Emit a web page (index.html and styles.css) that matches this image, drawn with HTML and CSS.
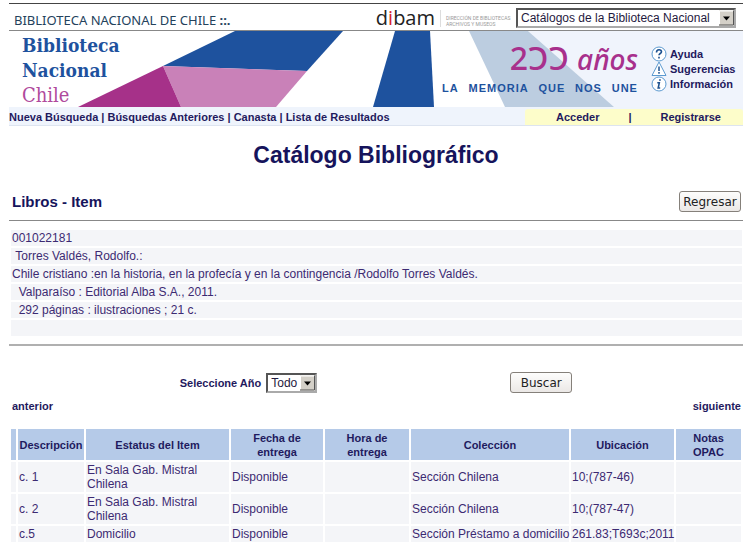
FILE: index.html
```
<!DOCTYPE html>
<html lang="es">
<head>
<meta charset="utf-8">
<meta name="viewport" content="width=device-width, initial-scale=1.0">
<title>Catálogo Bibliográfico</title>
<link rel="stylesheet" href="styles.css">
</head>

<body>

<!-- Cabecera -->
<div class="topbar">
	<div class="inst">BIBLIOTECA NACIONAL DE CHILE <b>::.</b></div>
	<div class="dibam">d<span>i</span>bam</div>
	<div class="dir">DIRECCIÓN DE BIBLIOTECAS<br>ARCHIVOS Y MUSEOS</div>
	<div class="select">
		<select class="catalogs" aria-label="Catálogo">
			<option>Catálogos de la Biblioteca Nacional</option>
		</select>
		<svg class="arrow" viewBox="0 0 15 15"><path fill="#d4d0c8" d="M0 0h15v15H0z"/><path fill="none" stroke="#fff" d="M.5 14V.5H14"/><path fill="none" stroke="#555" d="M14.5 0v14.5H0"/><path d="M4 6h7L7.500 10z"/></svg>
	</div>
</div>

<div class="banner">
	<svg class="art" viewBox="0 0 734 76" preserveAspectRatio="none">
		<path fill="#f0f4fc" d="M519 0h215v76H605z"/>
		<path fill="#bccde0" d="M460 0h59l86 76H496z"/>
		<path fill="#1e529e" d="M154 35L226 0h108l-36 40z"/>
		<path fill="#c981b8" d="M154 35l144 5-31 36h-95z"/>
		<path fill="#a63189" d="M154 35l18 41H69z"/>
		<path fill="#1e529e" d="M386 0h35l4 76h-61z"/>
	</svg>
	<div class="logo">Biblioteca<br>Nacional<br><span>Chile</span></div>
	<div class="slogan">
		<div class="years">2ƆƆ <i>años</i></div>
		<div class="motto"><span>LA</span> <span>MEMORIA</span> <span>QUE</span> <span>NOS</span> <span>UNE</span></div>
	</div>
	<div class="help">
		<a href="#"><svg viewBox="0 0 16 16"><circle cx="8" cy="8" r="7" fill="#fff" stroke="#5c9ad0"/><path fill="none" stroke="#1e5290" stroke-width="1.600" d="M5.500 6.500c0-3.500 5-3.500 5-.700 0 1.700-2.500 1.700-2.500 3.500M8 10.800v1.700"/></svg>Ayuda</a>
		<a href="#"><svg viewBox="0 0 16 16"><path fill="#fff" stroke="#5c9ad0" stroke-linejoin="round" d="M8 1l7 13.500H1z"/><path stroke="#1e5290" stroke-width="1.500" d="M8 5.500v4.500M8 11v1.700"/></svg>Sugerencias</a>
		<a href="#"><svg viewBox="0 0 16 16"><circle cx="8" cy="8" r="7" fill="#fff" stroke="#5c9ad0"/><path fill="none" stroke="#1e5290" stroke-width="1.600" d="M9.200 3.200l-.5 1.600M6.300 6.800h2L7.200 12h2"/></svg>Información</a>
	</div>
</div>

<!-- Menu -->
<div class="menu">
	<div class="links"><a href="#">Nueva Búsqueda</a> | <a href="#">Búsquedas Anteriores</a> | <a href="#">Canasta</a> | <a href="#">Lista de Resultados</a></div>
	<div class="session"><a href="#">Acceder</a> <span>|</span> <a href="#">Registrarse</a></div>
</div>

<h1>Catálogo Bibliográfico</h1>

<div class="title">
	<h2>Libros - Item</h2>
	<button type="button">Regresar</button>
</div>
<hr>

<div class="record">
	<div>001022181</div>
	<div>&nbsp;Torres Valdés, Rodolfo.:</div>
	<div>Chile cristiano :en la historia, en la profecía y en la contingencia /Rodolfo Torres Valdés.</div>
	<div>&nbsp; Valparaíso : Editorial Alba S.A., 2011.</div>
	<div>&nbsp; 292 páginas : ilustraciones ; 21 c.</div>
	<div></div>
</div>
<hr class="light">

<form class="filter">
	<label for="year">Seleccione Año</label>
	<div class="select">
		<select id="year">
			<option>Todo</option>
		</select>
		<svg class="arrow" viewBox="0 0 15 15"><path fill="#d4d0c8" d="M0 0h15v15H0z"/><path fill="none" stroke="#fff" d="M.5 14V.5H14"/><path fill="none" stroke="#555" d="M14.5 0v14.5H0"/><path d="M4 6h7L7.500 10z"/></svg>
	</div>
	<button type="button">Buscar</button>
</form>

<div class="pager">
	<a href="#">anterior</a>
	<a href="#">siguiente</a>
</div>

<table>
	<colgroup>
		<col class="c-mark"><col class="c-desc"><col class="c-status"><col class="c-date"><col class="c-hour"><col class="c-coll"><col class="c-loc"><col class="c-notes">
	</colgroup>
	<tr>
		<th></th>
		<th>Descripción</th>
		<th>Estatus del Item</th>
		<th>Fecha de<br>entrega</th>
		<th>Hora de<br>entrega</th>
		<th>Colección</th>
		<th>Ubicación</th>
		<th>Notas<br>OPAC</th>
	</tr>
	<tr>
		<td></td>
		<td>c. 1</td>
		<td>En Sala Gab. Mistral<br>Chilena</td>
		<td>Disponible</td>
		<td></td>
		<td>Sección Chilena</td>
		<td>10;(787-46)</td>
		<td></td>
	</tr>
	<tr>
		<td></td>
		<td>c. 2</td>
		<td>En Sala Gab. Mistral<br>Chilena</td>
		<td>Disponible</td>
		<td></td>
		<td>Sección Chilena</td>
		<td>10;(787-47)</td>
		<td></td>
	</tr>
	<tr>
		<td></td>
		<td>c.5</td>
		<td>Domicilio</td>
		<td>Disponible</td>
		<td></td>
		<td>Sección Préstamo a domicilio</td>
		<td>261.83;T693c;2011</td>
		<td></td>
	</tr>
</table>

</body>
</html>
```
FILE: styles.css
```
* {
  box-sizing: border-box;
}
body {
  margin: 3px 9px 8px;
  background: #fff;
  color: #1f1a5e;
  font-family: "Liberation Sans", Arial, sans-serif;
  font-size: 12px;
  line-height: 14px;
}
a {
  color: inherit;
  text-decoration: none;
}


/* cabecera */
.topbar {
  display: flex;
  align-items: center;
  height: 28px;
  padding: 2px 7px 0 5px;
  border-top: 1px solid #444;
  border-bottom: 1px solid #888;
}
.inst {
  flex: 1;
  color: #24425c;
  font-family: "Noto Sans", sans-serif;
  font-size: 13px;
  padding-top: 3px;
}
.dibam {
  color: #222;
  font-family: "Open Sans", sans-serif;
  font-size: 20px;
  font-weight: 500;
  line-height: 20px;
}
.dibam span {
  color: #d8232a;
}
.dir {
  width: 76px;
  margin-left: 5px;
  padding-left: 5px;
  border-left: 1px solid #ddd;
  color: #999;
  font-family: Roboto, sans-serif;
  font-size: 5px;
  line-height: 6px;
  padding-top: 5px;
  white-space: nowrap;
}

.select {
  position: relative;
}
.select select {
  appearance: none;
  display: block;
  height: 20px;
  padding: 0 17px 0 3px;
  border: 2px solid #555;
  border-right-color: #aaa;
  border-bottom-color: #aaa;
  border-radius: 0;
  background: #fff;
  color: #1f1a3e;
  font-family: inherit;
  font-size: 12px;
}
.select .catalogs {
  width: 220px;
}
.arrow {
  position: absolute;
  top: 2px;
  right: 2px;
  width: 15px;
  height: 16px;
  pointer-events: none;
}

.banner {
  position: relative;
  display: flex;
  height: 76px;
}
.art {
  position: absolute;
  width: 100%;
  height: 100%;
}
.logo, .slogan, .help {
  position: relative;
}
.logo {
  flex: 1;
  padding: 2px 0 0 13px;
  color: #1e529e;
  font-family: "DejaVu Serif Condensed", "DejaVu Serif", serif;
  font-size: 19px;
  font-weight: bold;
  line-height: 25px;
}
.logo span {
  color: #b04a9c;
  font-size: 20px;
  font-weight: normal;
}
.slogan {
  width: 196px;
  margin-right: 13px;
}
.years {
  padding-top: 8px;
  color: #a8308c;
  font-family: "Noto Sans", sans-serif;
  font-size: 32px;
  font-weight: 500;
  line-height: 38px;
  text-align: right;
  white-space: nowrap;
}
.years i {
  font-size: 28px;
}
.motto {
  display: flex;
  justify-content: space-between;
  padding-top: 3px;
  color: #1e529e;
  font-size: 11px;
  font-weight: bold;
  letter-spacing: 1px;
}
.help {
  width: 92px;
  padding-top: 15px;
  font-size: 11px;
  font-weight: bold;
}
.help a {
  display: flex;
  align-items: center;
  gap: 3px;
  height: 15px;
}
.help svg {
  flex: none;
  width: 16px;
  height: 16px;
}


/* menu */
.menu {
  display: flex;
  justify-content: space-between;
  height: 19px;
  padding-top: 2px;
  border-bottom: 1px solid #dde4f0;
  background: #eff4fc;
  font-size: 11px;
  font-weight: bold;
  line-height: 16px;
}
.session {
  display: flex;
  justify-content: space-between;
  width: 218px;
  padding: 0 22px 0 31px;
  border-radius: 3px 3px 0 0;
  background: #fdfdca;
}


h1 {
  margin: 15px 0 22px;
  color: #16145c;
  font-size: 23px;
  line-height: 28px;
  text-align: center;
}
h2 {
  margin: 0;
  color: #16145c;
  font-size: 15px;
  line-height: 20px;
}
.title {
  display: flex;
  align-items: center;
  justify-content: space-between;
  padding: 0 2px 0 3px;
}
button {
  width: 62px;
  height: 21px;
  padding: 0;
  border: 1px solid #85807a;
  border-radius: 3px;
  background: linear-gradient(#fdfdfc, #ebe8e6);
  color: #222;
  font-family: "DejaVu Sans", Verdana, sans-serif;
  font-size: 12px;
}
hr {
  margin: 8px 0 9px;
  border: 0;
  border-top: 1px solid #888;
}
hr.light {
  margin: 8px 0 26px;
  border-top: 2px solid #b0b0b0;
}

.record {
  display: grid;
  gap: 2px;
  padding: 0 1px 0 2px;
}
.record div {
  height: 16px;
  padding-left: 1px;
  background: #f4f5f8;
  color: #3c2a72;
  line-height: 16px;
}


.filter {
  display: flex;
  align-items: center;
  justify-content: center;
  font-size: 11px;
  font-weight: bold;
}
.filter .select {
  margin: 0 193px 0 5px;
}

.pager {
  display: flex;
  justify-content: space-between;
  padding: 6px 2px 14px 3px;
  font-size: 11px;
  font-weight: bold;
}


table {
  width: 100%;
  border-spacing: 2px;
  table-layout: fixed;
}
th, td {
  height: 16px;
  padding: 1px;
}
th {
  padding: 2px 0 1px;
  background: #b5cae8;
  font-size: 11px;
}
td {
  background: #f4f5f8;
  color: #3c2a72;
  text-align: left;
  white-space: nowrap;
}
.c-mark { width: 5px; }
.c-desc { width: 66px; }
.c-status { width: 143px; }
.c-date { width: 92px; }
.c-hour { width: 84px; }
.c-loc { width: 103px; }
.c-notes { width: 65px; }
```
